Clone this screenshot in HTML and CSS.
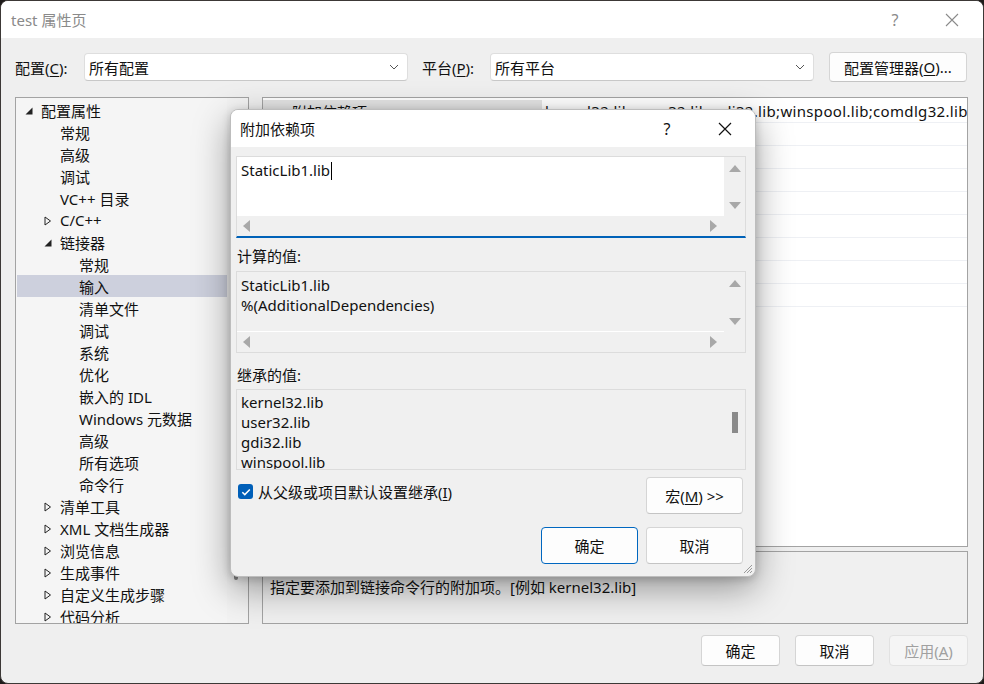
FILE: index.html
```html
<!DOCTYPE html>
<html lang="zh-CN">
<head>
<meta charset="utf-8">
<title>test 属性页</title>
<link rel="stylesheet" href="styles.css">
</head>
<body>
<div class="window">
  <div class="titlebar">
    <span class="title">test 属性页</span>
    <span class="tb-help">?</span>
    <span class="tb-close"><svg width="14" height="14" viewBox="0 0 14 14"><path d="M1 1L13 13M13 1L1 13" stroke="#8a8a8a" stroke-width="1.1" fill="none"/></svg></span>
  </div>
  <div class="content">
    <div class="config-row">
      <span class="lbl">配置(<u>C</u>):</span>
      <div class="combo"><span>所有配置</span><svg width="10" height="6" viewBox="0 0 10 6"><path d="M1 1L5 5L9 1" stroke="#555" fill="none"/></svg></div>
      <span class="lbl lbl2">平台(<u>P</u>):</span>
      <div class="combo"><span>所有平台</span><svg width="10" height="6" viewBox="0 0 10 6"><path d="M1 1L5 5L9 1" stroke="#555" fill="none"/></svg></div>
      <button class="btn cfg-btn">配置管理器(<u>O</u>)...</button>
    </div>
    <div class="main">
      <div class="tree">
        <div class="tree-list">
          <div class="item l0"><span class="arr"><svg width="8" height="8" viewBox="0 0 8 8"><path d="M7.5 0.5V7.5H0.5Z" fill="#222"/></svg></span>配置属性</div>
          <div class="item l1"><span class="arr"></span>常规</div>
          <div class="item l1"><span class="arr"></span>高级</div>
          <div class="item l1"><span class="arr"></span>调试</div>
          <div class="item l1"><span class="arr"></span>VC++ 目录</div>
          <div class="item l1"><span class="arr"><svg width="8" height="10" viewBox="0 0 8 10"><path d="M1 1L6.5 5L1 9Z" stroke="#222" fill="none"/></svg></span>C/C++</div>
          <div class="item l1"><span class="arr"><svg width="8" height="8" viewBox="0 0 8 8"><path d="M7.5 0.5V7.5H0.5Z" fill="#222"/></svg></span>链接器</div>
          <div class="item l2"><span class="arr"></span>常规</div>
          <div class="item l2 sel"><span class="arr"></span>输入</div>
          <div class="item l2"><span class="arr"></span>清单文件</div>
          <div class="item l2"><span class="arr"></span>调试</div>
          <div class="item l2"><span class="arr"></span>系统</div>
          <div class="item l2"><span class="arr"></span>优化</div>
          <div class="item l2"><span class="arr"></span>嵌入的 IDL</div>
          <div class="item l2"><span class="arr"></span>Windows 元数据</div>
          <div class="item l2"><span class="arr"></span>高级</div>
          <div class="item l2"><span class="arr"></span>所有选项</div>
          <div class="item l2"><span class="arr"></span>命令行</div>
          <div class="item l1"><span class="arr"><svg width="8" height="10" viewBox="0 0 8 10"><path d="M1 1L6.5 5L1 9Z" stroke="#222" fill="none"/></svg></span>清单工具</div>
          <div class="item l1"><span class="arr"><svg width="8" height="10" viewBox="0 0 8 10"><path d="M1 1L6.5 5L1 9Z" stroke="#222" fill="none"/></svg></span>XML 文档生成器</div>
          <div class="item l1"><span class="arr"><svg width="8" height="10" viewBox="0 0 8 10"><path d="M1 1L6.5 5L1 9Z" stroke="#222" fill="none"/></svg></span>浏览信息</div>
          <div class="item l1"><span class="arr"><svg width="8" height="10" viewBox="0 0 8 10"><path d="M1 1L6.5 5L1 9Z" stroke="#222" fill="none"/></svg></span>生成事件</div>
          <div class="item l1"><span class="arr"><svg width="8" height="10" viewBox="0 0 8 10"><path d="M1 1L6.5 5L1 9Z" stroke="#222" fill="none"/></svg></span>自定义生成步骤</div>
          <div class="item l1"><span class="arr"><svg width="8" height="10" viewBox="0 0 8 10"><path d="M1 1L6.5 5L1 9Z" stroke="#222" fill="none"/></svg></span>代码分析</div>
        </div>
        <div class="tree-scroll"><div class="thumb"></div></div>
      </div>
      <div class="right">
        <div class="grid">
          <div class="row first"><span class="name">附加依赖项</span><span class="val">kernel32.lib;user32.lib;gdi32.lib;winspool.lib;comdlg32.lib</span></div>
          <div class="row"><span class="name">忽略所有默认库</span><span class="val"></span></div>
          <div class="row"><span class="name">忽略特定默认库</span><span class="val"></span></div>
          <div class="row"><span class="name">模块定义文件</span><span class="val"></span></div>
          <div class="row"><span class="name">将模块添加到程序集</span><span class="val"></span></div>
          <div class="row"><span class="name">嵌入托管资源文件</span><span class="val"></span></div>
          <div class="row"><span class="name">强制符号引用</span><span class="val"></span></div>
          <div class="row"><span class="name">延迟加载的 DLL</span><span class="val"></span></div>
          <div class="row"><span class="name">程序集链接资源</span><span class="val"></span></div>
        </div>
        <div class="desc">
          <div class="desc-title">附加依赖项</div>
          <div class="desc-text">指定要添加到链接命令行的附加项。[例如 kernel32.lib]</div>
        </div>
      </div>
    </div>
    <div class="footer">
      <button class="btn fbtn">确定</button>
      <button class="btn fbtn">取消</button>
      <button class="btn fbtn disabled">应用(<u>A</u>)</button>
    </div>
  </div>

  <div class="dialog">
    <div class="dlg-title">
      <span class="dlg-name">附加依赖项</span>
      <span class="dlg-help">?</span>
      <span class="dlg-close"><svg width="14" height="14" viewBox="0 0 14 14"><path d="M1 1L13 13M13 1L1 13" stroke="#111" stroke-width="1.2" fill="none"/></svg></span>
    </div>
    <div class="dlg-body">
      <div class="box edit">
        <div class="box-text"><div>StaticLib1.lib<span class="caret"></span></div></div>
        <div class="vscroll"><span class="tri up"></span><span class="tri down"></span></div>
        <div class="hscroll"><span class="tri left"></span><span class="tri right"></span></div>
        <div class="corner"></div>
      </div>
      <div class="field-label">计算的值:</div>
      <div class="box computed">
        <div class="box-text"><div>StaticLib1.lib</div><div>%(AdditionalDependencies)</div></div>
        <div class="vscroll"><span class="tri up"></span><span class="tri down"></span></div>
        <div class="hscroll"><span class="tri left"></span><span class="tri right"></span></div>
        <div class="corner"></div>
      </div>
      <div class="field-label second">继承的值:</div>
      <div class="box inherited">
        <div class="box-text"><div>kernel32.lib</div><div>user32.lib</div><div>gdi32.lib</div><div>winspool.lib</div><div>comdlg32.lib</div></div>
        <div class="vscroll2"><div class="vthumb"></div></div>
      </div>
      <div class="opt-row">
        <label class="check"><span class="cbox"><svg width="12" height="12" viewBox="0 0 12 12"><path d="M2.3 6.2L4.8 8.6L9.8 3.4" stroke="#fff" stroke-width="1.5" fill="none"/></svg></span>从父级或项目默认设置继承(<u>I</u>)</label>
        <button class="btn dbtn">宏(<u>M</u>) &gt;&gt;</button>
      </div>
      <div class="dlg-buttons">
        <button class="btn dbtn default">确定</button>
        <button class="btn dbtn">取消</button>
      </div>
    </div>
    <svg class="grip" width="12" height="12" viewBox="0 0 12 12"><path d="M11 3L3 11M11 6L6 11M11 9L9 11" stroke="#999" stroke-width="1" fill="none"/></svg>
  </div>
</div>
</body>
</html>
```
FILE: styles.css
```css
* { box-sizing: border-box; }
html, body { margin: 0; padding: 0; }
body {
  background: #1e1b1a;
  width: 984px;
  height: 684px;
  overflow: hidden;
  font-family: "Noto Sans", "Noto Sans CJK SC", sans-serif;
  font-size: 15px;
  color: #111;
}
u { text-decoration: underline; text-underline-offset: 2px; }

.window {
  position: relative;
  width: 984px;
  height: 684px;
  background: #efefef;
  border: 1px solid #3c3836;
  border-radius: 8px;
  overflow: hidden;
  display: flex;
  flex-direction: column;
}

.titlebar {
  height: 37px;
  background: #fff;
  display: flex;
  align-items: center;
  padding-left: 10px;
  color: #8a8a8a;
  flex: none;
}
.title { flex: 1; }
.tb-help { width: 20px; text-align: center; margin-right: 37px; font-size: 16px; }
.tb-close { width: 20px; display: flex; justify-content: center; margin-right: 21px; }

.content {
  flex: 1;
  display: flex;
  flex-direction: column;
  padding: 14px 15px 0 14px;
  min-height: 0;
  min-width: 0;
}

.config-row {
  display: flex;
  align-items: center;
  height: 30px;
}
.lbl { width: 69px; white-space: nowrap; }
.lbl2 { width: 68px; margin-left: 14px; }
.combo {
  width: 324px;
  height: 28px;
  background: #fff;
  border: 1px solid #dedede;
  border-bottom-color: #c8c8c8;
  border-radius: 4px;
  display: flex;
  align-items: center;
  justify-content: space-between;
  padding: 0 8px 0 4px;
}
.btn {
  font-family: inherit;
  font-size: 15px;
  color: #111;
  background: #fdfdfd;
  border: 1px solid #d5d5d5;
  border-bottom-color: #c4c4c4;
  border-radius: 4px;
  padding: 0;
  display: flex;
  align-items: center;
  justify-content: center;
}
.cfg-btn { width: 138px; height: 30px; margin-left: 15px; }

.main {
  display: flex;
  margin-top: 15px;
  height: 527px;
  gap: 13px;
  min-width: 0;
  overflow: hidden;
}

.tree {
  width: 234px;
  flex: none;
  background: #f5f5f5;
  border: 1px solid #a3a3a3;
  display: flex;
  overflow: hidden;
}
.tree-list { flex: 1; min-width: 0; padding-top: 1px; overflow: hidden; }
.item {
  height: 22px;
  display: flex;
  align-items: center;
  white-space: nowrap;
  margin-left: 1px;
}
.item.l0 { padding-left: 8px; }
.item.l1 { padding-left: 27px; }
.item.l2 { padding-left: 46px; }
.item.sel { background: #cdd0dd; }
.arr { width: 16px; display: flex; align-items: center; flex: none; }
.l0 .arr svg, .l1 .arr svg { margin-top: 2px; }

.tree-scroll {
  width: 21px;
  background: #f3f3f3;
  position: relative;
  flex: none;
}
.thumb {
  position: absolute;
  left: 7px;
  top: 16px;
  width: 4px;
  height: 466px;
  background: #858585;
  border-radius: 2px;
}

.right {
  flex: 1 1 0;
  min-width: 0;
  display: flex;
  flex-direction: column;
  gap: 4px;
  overflow: hidden;
}
.grid {
  height: 450px;
  flex: none;
  background: #fff;
  border: 1px solid #a3a3a3;
  padding-top: 2px;
  overflow: hidden;
}
.row {
  display: flex;
  height: 23px;
  border-bottom: 1px solid #eef0f4;
  align-items: center;
  white-space: nowrap;
  overflow: hidden;
}
.row .name { width: 279px; flex: none; padding-left: 29px; height: 100%; display: flex; align-items: center; }
.row.first .name { background: #e4e4e4; }
.row .val { padding-left: 3px; overflow: hidden; min-width: 0; flex: 1 1 0; letter-spacing: 0.33px; }

.desc {
  flex: 1;
  background: #f0f0f0;
  border: 1px solid #a3a3a3;
  padding: 3px 7px;
}
.desc-title { font-weight: bold; line-height: 20px; }
.desc-text { line-height: 20px; margin-top: 2px; }

.footer {
  display: flex;
  justify-content: flex-end;
  gap: 15px;
  margin-top: 11px;
}
.fbtn { width: 79px; height: 31px; }
.fbtn.disabled { color: #a0a0a0; background: #f5f5f5; border-color: #e2e2e2; }

/* modal dialog */
.dialog {
  position: absolute;
  left: 229px;
  top: 108px;
  width: 526px;
  height: 468px;
  background: #f0f0f0;
  border: 1px solid #bdbdbd;
  border-radius: 8px;
  box-shadow: 0 12px 36px rgba(0, 0, 0, 0.38), 0 2px 8px rgba(0, 0, 0, 0.18);
  overflow: hidden;
  display: flex;
  flex-direction: column;
}
.dlg-title {
  height: 37px;
  background: #fff;
  display: flex;
  align-items: center;
  padding-left: 9px;
  flex: none;
}
.dlg-name { flex: 1; }
.dlg-help { width: 20px; text-align: center; font-size: 16px; margin-right: 38px; }
.dlg-close { width: 20px; display: flex; justify-content: center; margin-right: 20px; }

.dlg-body {
  padding: 9px 9px 0 5px;
  display: flex;
  flex-direction: column;
}

.box {
  display: grid;
  grid-template-columns: minmax(0, 1fr) 21px;
  grid-template-rows: minmax(0, 1fr) 20px;
  border: 1px solid #dcdcdc;
  line-height: 20px;
  overflow: hidden;
  flex: none;
}
.box-text { grid-column: 1; grid-row: 1; padding: 3px 4px; overflow: hidden; white-space: nowrap; }
.edit { height: 82px; border-bottom: 2px solid #0062b8; background: #fff; }
.edit .box-text { background: #fff; }
.computed { height: 82px; background: #f0f0f0; }
.computed .box-text { border-bottom: 1px solid #fff; }
.inherited { height: 81px; grid-template-rows: minmax(0, 1fr); background: #f0f0f0; }
.inherited .box-text { padding-top: 2px; }

.vscroll {
  grid-column: 2;
  grid-row: 1;
  background: #f0f0f0;
  display: flex;
  flex-direction: column;
  justify-content: space-between;
  align-items: center;
  padding: 8px 0 7px;
}
.hscroll {
  grid-column: 1;
  grid-row: 2;
  width: 100%;
  background: #f0f0f0;
  display: flex;
  align-items: center;
  padding: 0 7px 0 6px;
}
.hscroll .tri.right { margin-left: auto; }
.corner { grid-column: 2; grid-row: 2; background: #f0f0f0; }
.vscroll2 { grid-column: 2; grid-row: 1; position: relative; background: #f0f0f0; }
.vthumb {
  position: absolute;
  left: 8px;
  top: 22px;
  width: 6px;
  height: 21px;
  background: #8a8a8a;
}

.tri { width: 0; height: 0; border-style: solid; display: block; flex: none; }
.tri.up { border-width: 0 6px 7px 6px; border-color: transparent transparent #a8a8a8 transparent; }
.tri.down { border-width: 7px 6px 0 6px; border-color: #a8a8a8 transparent transparent transparent; }
.tri.left { border-width: 6px 7px 6px 0; border-color: transparent #a8a8a8 transparent transparent; }
.tri.right { border-width: 6px 0 6px 7px; border-color: transparent transparent transparent #a8a8a8; }

.caret {
  display: inline-block;
  width: 1px;
  height: 18px;
  background: #000;
  vertical-align: -4px;
  margin-left: 1px;
}

.field-label { line-height: 20px; margin-top: 8px; margin-bottom: 5px; padding-left: 1px; flex: none; }
.field-label.second { margin-top: 12px; margin-bottom: 4px; }

.opt-row {
  display: flex;
  justify-content: space-between;
  align-items: flex-start;
  margin-top: 7px;
  padding-right: 3px;
}
.check { display: flex; align-items: center; margin-top: 4px; padding-left: 2px; white-space: nowrap; }
.cbox {
  width: 15px;
  height: 15px;
  background: #005fb8;
  border-radius: 3px;
  display: flex;
  align-items: center;
  justify-content: center;
  margin-right: 5px;
}
.dbtn { width: 97px; height: 37px; }
.dbtn.default { border: 1px solid #0067c0; }
.dlg-buttons {
  display: flex;
  justify-content: flex-end;
  gap: 8px;
  margin-top: 13px;
  padding-right: 3px;
}
.grip { position: absolute; right: 2px; bottom: 2px; }
```
